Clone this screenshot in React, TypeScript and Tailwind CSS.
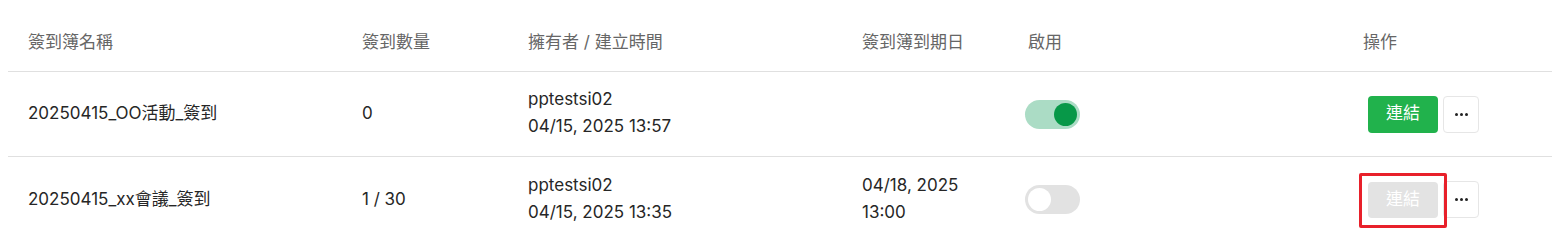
import React from "react";

type Fila = {
  nombre: string;
  cantidad: string;
  owner: string;
  creado: string;
  vence: string[];
  activo: boolean;
  marcado?: boolean;
};

const filas: Fila[] = [
  {
    nombre: "20250415_OO活動_簽到",
    cantidad: "0",
    owner: "pptestsi02",
    creado: "04/15, 2025 13:57",
    vence: [],
    activo: true,
  },
  {
    nombre: "20250415_xx會議_簽到",
    cantidad: "1 / 30",
    owner: "pptestsi02",
    creado: "04/15, 2025 13:35",
    vence: ["04/18, 2025", "13:00"],
    activo: false,
    marcado: true,
  },
];

const cols = "grid grid-cols-[334px_166px_334px_166px_335px_1fr]";

const Toggle = ({ on }: { on: boolean }) => (
  <div
    className={
      on
        ? "w-[55px] h-[29px] rounded-full bg-[#abdcc5] flex items-center justify-end pr-[3px]"
        : "w-[55px] h-[29px] rounded-full bg-[#e2e2e2] flex items-center justify-start pl-[3px]"
    }
  >
    <div
      className={
        on
          ? "w-[23px] h-[23px] rounded-full bg-[#079848]"
          : "w-[23px] h-[23px] rounded-full bg-white"
      }
    />
  </div>
);

const Mas = () => (
  <button
    type="button"
    className="w-[36px] h-[37px] rounded-[4px] border border-[#e6e6e6] bg-white flex items-center justify-center gap-[2px]"
  >
    <span className="w-[3px] h-[3px] rounded-full bg-[#222]" />
    <span className="w-[3px] h-[3px] rounded-full bg-[#222]" />
    <span className="w-[3px] h-[3px] rounded-full bg-[#222]" />
  </button>
);

export default function App() {
  return (
    <div
      className="w-[1560px] h-[245px] bg-white px-2 overflow-hidden text-[17px] text-[#262626]"
      style={{ fontFamily: 'Inter, "Noto Sans CJK TC", sans-serif' }}
    >
      <div className={`${cols} h-[72px] pt-[14px] items-center border-b border-[#e0e0e0] text-[#666]`}>
        <div className="pl-5">簽到簿名稱</div>
        <div className="pl-5">簽到數量</div>
        <div className="pl-5">擁有者 / 建立時間</div>
        <div className="pl-5">簽到簿到期日</div>
        <div className="pl-5">啟用</div>
        <div className="pl-5">操作</div>
      </div>

      {filas.map((f, i) => (
        <div
          key={f.nombre}
          className={`${cols} h-[85px] items-center ${i === 0 ? "border-b border-[#e0e0e0]" : ""}`}
        >
          <div className="pl-5">{f.nombre}</div>
          <div className="pl-5">{f.cantidad}</div>
          <div className="pl-5 leading-[27px] pb-[2px]">
            <div>{f.owner}</div>
            <div>{f.creado}</div>
          </div>
          <div className="pl-5 leading-[27px] pb-[2px]">
            {f.vence.map((v) => (
              <div key={v}>{v}</div>
            ))}
          </div>
          <div className="pl-[17px]">
            <Toggle on={f.activo} />
          </div>
          <div className="pl-[25px] flex items-center gap-[5px]">
            <div className="relative">
              <button
                type="button"
                className={
                  f.activo
                    ? "w-[70px] h-[37px] rounded-[4px] bg-[#21b24c] text-white text-[17px]"
                    : "w-[70px] h-[36px] rounded-[4px] bg-[#e3e3e3] text-white text-[17px]"
                }
              >
                連結
              </button>
              {f.marcado && (
                <div className="absolute -left-[9px] -top-[9px] w-[88px] h-[55px] border-[3px] border-[#e8202a] rounded-[2px]" />
              )}
            </div>
            <Mas />
          </div>
        </div>
      ))}
    </div>
  );
}
